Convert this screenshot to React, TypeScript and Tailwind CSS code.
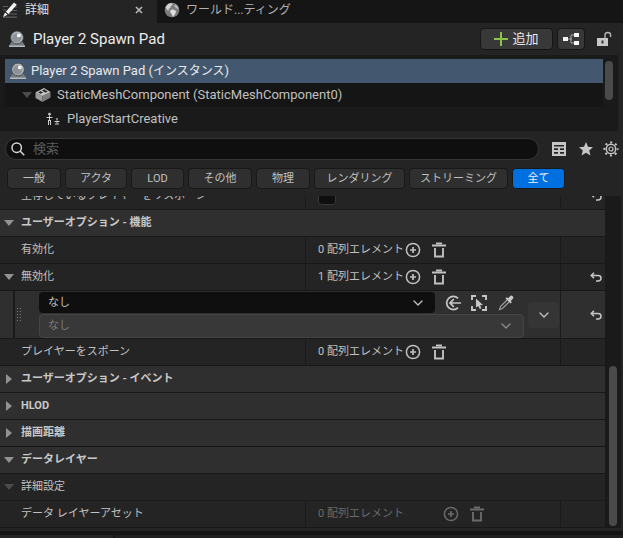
import React from "react";
import { ChevronDown } from "lucide-react";

const rowGrid = "grid grid-cols-[306fr_255fr_44px]";

const filters = [
  { label: "一般", width: "w-[54px]" },
  { label: "アクタ", width: "w-[62px]" },
  { label: "LOD", width: "w-[53px]" },
  { label: "その他", width: "w-[64px]" },
  { label: "物理", width: "w-[54px]" },
  { label: "レンダリング", width: "w-[91px]" },
  { label: "ストリーミング", width: "w-[99px]" },
  { label: "全て", width: "w-[53px]", active: true },
];

const PenIcon = () => (
  <svg viewBox="0 0 16 16" className="h-4 w-4 shrink-0" fill="none">
    <path d="M10 5h5M9 8.5h6M6 12h9M1 15.2h14M1 4.5h5M1 8h3" stroke="#5e5e5e" strokeWidth="1.2" />
    <path d="M12 0.5l2.8 2.3L6.5 12 3.8 9.7zM3 10.6l2.6 2.1L1 15z" fill="#f2f2f2" />
  </svg>
);

const GlobeIcon = () => (
  <svg viewBox="0 0 16 16" className="h-4 w-4 shrink-0">
    <circle cx="8" cy="8" r="7.3" fill="#7c7c7c" />
    <path d="M1.5 5l3-3.2 3.2-.8 1 1.6-1.8 1.5-.6 2L4.5 7l.3 2-1.6-1z" fill="#d2d2d2" />
    <path d="M6.5 8l3-.6 2.6 1.8-.8 2.6L9 15l-1.2-2.8-1.6-2z" fill="#dedede" />
    <path d="M10.8 2.2l2.7 2 1.2 3-2-.6-2.2-2z" fill="#bdbdbd" />
  </svg>
);

const ActorIcon = () => (
  <svg viewBox="0 0 18 18" className="h-[18px] w-[18px] shrink-0">
    <path d="M3.5 11.5h11L17 16H1z" fill="#74797e" />
    <path d="M1 15.5h16V17H1z" fill="#b4b8bb" />
    <circle cx="9" cy="7.5" r="6.4" fill="#aeb3b7" stroke="#3c4043" strokeWidth="0.8" />
    <circle cx="8.6" cy="7.9" r="4.6" fill="#8d9398" />
    <circle cx="10.8" cy="5.4" r="1.9" fill="#f5f5f5" />
  </svg>
);

const CubeIcon = () => (
  <svg viewBox="0 0 16 16" className="h-4 w-4 shrink-0">
    <path d="M0.5 5.5L7.5 9v6L0.5 11z" fill="#9b9b9b" />
    <path d="M7.5 9l8-4v5.5l-8 4.5z" fill="#7d7d7d" />
    <path d="M0.5 5.5L9 1l6.5 4-8 4z" fill="#c6c6c6" />
    <path d="M3 5.4l2.5-1.3 2.6 1.4-2.4 1.3zM7 3.4l2.2-1.2L12.8 4.5l-2.5 1.2z" fill="#2c2c2c" />
  </svg>
);

const PlayerStartIcon = () => (
  <svg viewBox="0 0 16 14" className="h-[14px] w-4 shrink-0" fill="none" stroke="#cfcfcf">
    <path d="M1.5 5.5h6M4.5 4v5M3.5 13V8M5.5 13V8" />
    <circle cx="4.5" cy="2.2" r="1" fill="#cfcfcf" />
    <path d="M9.5 9.5h5M12 8.5v3M11 13v-2M13 13v-2" />
    <circle cx="12" cy="7" r=".5" />
  </svg>
);

const TreeIcon = () => (
  <svg viewBox="0 0 16 14" className="h-[14px] w-4" fill="none">
    <path d="M5 7h4M12 3H8v8h4" stroke="#a8a8a8" />
    <path d="M0 5h5v4H0zM11 1h5v4h-5zM11 9h5v4h-5z" fill="#f4f4f4" />
  </svg>
);

const LockIcon = () => (
  <svg viewBox="0 0 16 16" className="h-4 w-4" fill="none">
    <path d="M9 7V4.3a2.8 2.8 0 0 1 5.6 0V6" stroke="#b4b4b4" strokeWidth="1.4" />
    <path d="M1 7h11v8H1z" fill="#c8c8c8" />
    <path d="M6.5 9.5v3" stroke="#333" strokeWidth="2" />
  </svg>
);

const SearchIcon = () => (
  <svg viewBox="0 0 14 14" className="h-[14px] w-[14px] shrink-0" fill="none" stroke="#d6d6d6" strokeWidth="1.5">
    <circle cx="5.7" cy="5.7" r="4.7" />
    <path d="M9 9l4.3 4.3" />
  </svg>
);

const GridIcon = () => (
  <svg viewBox="0 0 14 14" className="h-[14px] w-[14px]">
    <path d="M0 0h14v14H0z" fill="#c6c6c6" />
    <path d="M2 3h10v1.5H2zM2 6.3h4v1.7H2zM8 6.3h4v1.7H8zM2 10h4v1.7H2zM8 10h4v1.7H8z" fill="#242424" />
  </svg>
);

const StarIcon = () => (
  <svg viewBox="0 0 14 14" className="h-[14px] w-[14px]" fill="#c6c6c6">
    <path d="M7 0l2 4.8 5 .4-3.8 3.3 1.2 5L7 10.8l-4.4 2.7 1.2-5L0 5.2l5-.4z" />
  </svg>
);

const GearIcon = () => (
  <svg viewBox="0 0 16 16" className="h-4 w-4" fill="none" stroke="#c6c6c6">
    <circle cx="8" cy="8" r="4.7" strokeWidth="1.5" />
    <circle cx="8" cy="8" r="2" strokeWidth="1.2" />
    <circle cx="8" cy="8" r="6.6" strokeWidth="2" strokeDasharray="2 3.18" strokeDashoffset="1" />
  </svg>
);

const PlusCircleIcon = () => (
  <svg viewBox="0 0 16 16" className="h-4 w-4" fill="none" stroke="currentColor" strokeWidth="1.5">
    <circle cx="8" cy="8" r="6.6" />
    <path d="M8 5v6M5 8h6" strokeWidth="1.7" />
  </svg>
);

const TrashIcon = () => (
  <svg viewBox="0 0 14 16" className="h-4 w-[14px]" fill="none" stroke="currentColor">
    <path d="M0 3.5h14" strokeWidth="2" />
    <path d="M4 1.5h6" strokeWidth="2" />
    <path d="M3 6v8.5h8V6" strokeWidth="1.9" />
  </svg>
);

const UndoIcon = () => (
  <svg viewBox="0 0 12 10" className="h-[10px] w-3" fill="none" stroke="#c6c6c6" strokeWidth="1.5">
    <path d="M4 0.7L1.2 3.5 4 6.3M1.2 3.5H8a3 2.7 0 0 1 0 5.4H6" />
  </svg>
);

const UseSelectedIcon = () => (
  <svg viewBox="0 0 16 16" className="h-4 w-4" fill="none" stroke="#c6c6c6" strokeWidth="1.7">
    <path d="M13 3.4a6.6 6.6 0 1 0 0 9.2" />
    <path d="M16 8H5M8.8 4.2L5 8l3.8 3.8" />
  </svg>
);

const BrowseIcon = () => (
  <svg viewBox="0 0 16 16" className="h-4 w-4" fill="none">
    <path d="M1 5V1h4M11 1h4v4M15 11v4h-4M5 15H1v-4" stroke="#c6c6c6" strokeWidth="1.9" />
    <path d="M5 3.5l7 6.5-3 .3 1.5 3-1.8.8-1.4-3L5 12.5z" fill="#c6c6c6" />
  </svg>
);

const PickerIcon = () => (
  <svg viewBox="0 0 16 16" className="h-4 w-4" fill="none">
    <path d="M9 5L2.5 11.5l-1 3 3-1L11 7" stroke="#a0a0a0" strokeWidth="1.2" />
    <path d="M7.5 3.5l1.2-1.2 1.5 1L12 1.2a1.8 1.8 0 0 1 2.7 2.7L12.8 6l1 1.3-1.3 1.2z" fill="#c6c6c6" />
  </svg>
);

const Arrow = ({ open = false, dim = false }: { open?: boolean; dim?: boolean }) => (
  <svg viewBox="0 0 10 10" className="h-[10px] w-[10px] shrink-0" fill={dim ? "#4c4c4c" : "#929292"}>
    {open ? <path d="M0 2h10L5 8z" /> : <path d="M2 0v10l6-5z" />}
  </svg>
);

const Section = ({ title, open = false }: { title: string; open?: boolean }) => (
  <button className="flex h-[27px] w-full items-center gap-[7px] border-b border-[#181818] bg-[#2f2f2f] pl-1 text-left font-bold text-[#c8c8c8]">
    <Arrow open={open} />
    {title}
  </button>
);

const ResetButton = () => (
  <button aria-label="リセット" className="flex h-full w-full items-center justify-end pr-[3px]">
    <UndoIcon />
  </button>
);

type ArrayRowProps = {
  label: string;
  count: number;
  expanded?: boolean;
  disabled?: boolean;
  reset?: boolean;
};

const ArrayRow = ({ label, count, expanded, disabled, reset }: ArrayRowProps) => (
  <div className={`${rowGrid} h-[27px] border-b border-[#181818]`}>
    <div className="flex items-center gap-[7px] border-r border-[#1a1a1a] pl-1">
      {expanded ? <Arrow open /> : <span className="w-[10px]" />}
      {label}
    </div>
    <div className={`flex items-center border-r border-[#1a1a1a] pl-3 ${disabled ? "text-[#6a6a6a]" : ""}`}>
      <span className={disabled ? "w-[125px]" : "w-[87px]"}>{count} 配列エレメント</span>
      <button aria-label="追加" disabled={disabled} className="mr-[11px]">
        <PlusCircleIcon />
      </button>
      <button aria-label="空にする" disabled={disabled}>
        <TrashIcon />
      </button>
    </div>
    <div>{reset && <ResetButton />}</div>
  </div>
);

const App = () => {
  return (
    <main className="bg-[#242424] font-['Roboto','Noto_Sans_CJK_JP',sans-serif] text-[11px] leading-4 text-[#c0c0c0]">
      <div role="tablist" className="flex h-[23px] bg-[#151515] text-xs">
        <div className="flex w-[157px] items-center bg-[#242424] pb-1 pl-[2px] pr-[14px] text-[#e0e0e0]">
          <PenIcon />
          <button role="tab" aria-selected="true" className="ml-[7px] flex-1 text-left">
            詳細
          </button>
          <button aria-label="閉じる">
            <svg viewBox="0 0 8 8" className="h-2 w-2" stroke="#b8b8b8" strokeWidth="1.6">
              <path d="M1 1l6 6M7 1L1 7" />
            </svg>
          </button>
        </div>
        <button role="tab" aria-selected="false" className="flex items-center gap-[6px] pb-1 pl-[7px] text-[#b0b0b0]">
          <GlobeIcon />
          ワールド...ティング
        </button>
      </div>

      <header className="flex h-8 items-center pl-2 pr-[11px]">
        <ActorIcon />
        <h1 className="ml-[7px] flex-1 text-[15px] text-[#ececec]">Player 2 Spawn Pad</h1>
        <button className="flex h-[22px] w-[73px] items-center justify-center gap-1 rounded border border-[#161616] bg-[#383838] text-[13px] text-[#e8e8e8]">
          <svg viewBox="0 0 14 14" className="h-[14px] w-[14px]" stroke="#8bc24a" strokeWidth="2">
            <path d="M7 0v14M0 7h14" />
          </svg>
          追加
        </button>
        <button aria-label="階層" className="ml-1 flex h-[22px] w-7 items-center justify-center rounded border border-[#161616] bg-[#383838]">
          <TreeIcon />
        </button>
        <button aria-label="ロック" className="ml-[11px]">
          <LockIcon />
        </button>
      </header>

      <div className="mr-[5px] flex bg-[#1a1a1a] pl-[5px] pt-1 text-[13px]">
        <ul className="min-w-0 flex-1">
          <li className="flex h-6 items-center gap-1 bg-[#43586f] pl-1 text-[#e8e8e8]">
            <ActorIcon />
            <span>
              Player 2 Spawn Pad (<span className="text-xs">インスタンス</span>)
            </span>
          </li>
          <li className="flex h-6 items-center bg-[#151515] pl-[17px]">
            <Arrow open dim />
            <span className="ml-[3px] mr-[6px]">
              <CubeIcon />
            </span>
            StaticMeshComponent (StaticMeshComponent0)
          </li>
          <li className="flex h-6 items-center gap-[6px] pl-10">
            <PlayerStartIcon />
            PlayerStartCreative
          </li>
        </ul>
        <div className="w-[15px] pl-[2px] pt-[2px]">
          <div className="h-[39px] w-2 rounded-full bg-[#4a4a4a]" />
        </div>
      </div>

      <div className="flex items-center pl-[5px] pr-1 pt-[7px]">
        <label className="flex h-[22px] flex-1 items-center gap-2 rounded-full border border-[#363636] bg-[#0f0f0f] pl-[5px]">
          <SearchIcon />
          <input
            type="search"
            aria-label="検索"
            placeholder="検索"
            className="min-w-0 flex-1 bg-transparent text-[13px] outline-none placeholder:text-[#5c5c5c]"
          />
        </label>
        <div className="ml-[13px] flex items-center">
          <button aria-label="表"><GridIcon /></button>
          <button aria-label="お気に入り" className="ml-[13px]"><StarIcon /></button>
          <button aria-label="設定" className="ml-[10px]"><GearIcon /></button>
        </div>
      </div>

      <div className="flex gap-1 pb-[7px] pl-[7px] pt-2">
        {filters.map((filter) => (
          <button
            key={filter.label}
            className={`h-[21px] shrink-0 rounded border border-[#181818] ${filter.width} ${
              filter.active ? "bg-[#0070e0] text-[#f0f0f0]" : "bg-[#2f2f2f]"
            }`}
          >
            {filter.label}
          </button>
        ))}
      </div>

      <div className="mr-[2px] flex bg-[#1a1a1a]">
        <div className="min-w-0 flex-1 bg-[#242424]">
          {/* first row is scrolled halfway under the filter bar */}
          <div className="flex h-[14px] items-end overflow-hidden">
            <div className={`${rowGrid} h-[27px] w-full shrink-0 border-b border-[#181818]`}>
              <label htmlFor="respawn" className="flex items-center border-r border-[#1a1a1a] pl-[21px]">
                生存しているプレイヤーをリスポーン
              </label>
              <div className="flex items-center border-r border-[#1a1a1a] pl-3">
                <input
                  id="respawn"
                  type="checkbox"
                  className="h-[18px] w-[18px] appearance-none rounded-sm border border-[#383838] bg-[#0f0f0f]"
                />
              </div>
              <ResetButton />
            </div>
          </div>
          <Section title="ユーザーオプション - 機能" open />
          <ArrayRow label="有効化" count={0} />
          <ArrayRow label="無効化" count={1} expanded reset />
          <div className="flex h-12 border-b border-[#181818] bg-[#2f2f2f]">
            <div className="w-[15px] border-r-2 border-[#1a1a1a]" />
            <div className="flex w-6 items-center pl-[2px]">
              <svg viewBox="0 0 5 14" className="h-[14px] w-[5px]" stroke="#7a7a7a" strokeDasharray="1 2">
                <path d="M0.5 0v14M3.5 0v14" />
              </svg>
            </div>
            <div className="flex min-w-0 flex-1 flex-col gap-px pt-px">
              <div className="flex items-center">
                <div className="relative mr-[10px] flex-1">
                  <select aria-label="アクタ" className="block h-[21px] w-full appearance-none rounded bg-[#0f0f0f] pl-[9px]">
                    <option>なし</option>
                  </select>
                  <ChevronDown size={16} className="pointer-events-none absolute right-[9px] top-[3px]" />
                </div>
                <button aria-label="選択アセットを使用" className="mr-[10px]"><UseSelectedIcon /></button>
                <button aria-label="参照" className="mr-[11px]"><BrowseIcon /></button>
                <button aria-label="ピック" className="mr-[10px]"><PickerIcon /></button>
              </div>
              <div className="relative">
                <select
                  aria-label="コンポーネント"
                  disabled
                  className="block h-6 w-full appearance-none rounded border border-[#454545] bg-[#383838] pl-2 text-[#7c7c7c]"
                >
                  <option>なし</option>
                </select>
                <ChevronDown size={16} className="pointer-events-none absolute right-[10px] top-1 text-[#8a8a8a]" />
              </div>
            </div>
            <div className="flex w-[37px] items-center border-r border-[#1a1a1a] pl-1">
              <button aria-label="エレメント操作" className="flex h-[26px] w-[31px] items-center justify-center rounded bg-[#353535]">
                <ChevronDown size={16} />
              </button>
            </div>
            <div className="w-11">
              <ResetButton />
            </div>
          </div>
          <ArrayRow label="プレイヤーをスポーン" count={0} />
          <Section title="ユーザーオプション - イベント" />
          <Section title="HLOD" />
          <Section title="描画距離" />
          <Section title="データレイヤー" open />
          <button className="flex h-[27px] w-full items-center gap-[7px] border-b border-[#1c1c1c] pl-1 text-left">
            <Arrow open dim />
            詳細設定
          </button>
          <ArrayRow label="データ レイヤーアセット" count={0} disabled />
        </div>
        <div className="flex w-4 flex-col items-start justify-end pb-[2px] pl-1">
          <div className="h-[160px] w-2 rounded-full bg-[#4a4a4a]" />
        </div>
      </div>

      <div className="mt-[3px] h-1 bg-[#151515]" />
      <div className="flex h-[3px] bg-[#151515]">
        <div className="w-[113px] bg-[#242424]" />
        <div className="ml-[2px] flex-1 bg-[#202020]" />
      </div>
    </main>
  );
};

export default App;
